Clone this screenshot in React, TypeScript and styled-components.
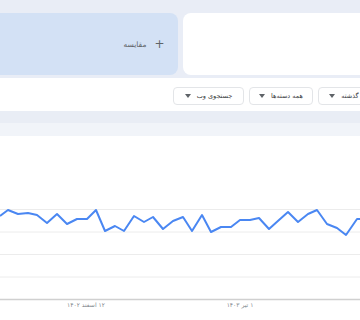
import React from 'react';
import styled, { createGlobalStyle } from 'styled-components';

const GlobalStyle = createGlobalStyle`
  html, body {
    margin: 0;
    padding: 0;
    background: #ffffff;
  }
  body {
    font-family: "DejaVu Sans", "Noto Sans", sans-serif;
  }
  * {
    box-sizing: border-box;
  }
`;

const Page = styled.div`
  width: 360px;
  height: 320px;
  overflow: hidden;
  direction: rtl;
  background: #ffffff;
`;

const TopBand = styled.div`
  background: #e9edf6;
  padding: 13px 0 3px;
`;

const CardRow = styled.div`
  width: 376px;
  margin-right: -8px;
  display: grid;
  grid-template-columns: 1fr 1fr;
  gap: 5px;
`;

const TermCard = styled.div<{ $active?: boolean }>`
  height: 62px;
  border-radius: 8px;
  background: ${(p) => (p.$active ? '#d3e1f5' : '#ffffff')};
  display: flex;
  align-items: center;
  gap: 8px;
  padding-right: 13px;
  color: #5f6368;
  font-size: 7.5px;
`;

const Plus = styled.span`
  font-size: 12px;
  line-height: 1;
  color: #5f6368;
`;

const FilterBand = styled.div`
  background: #ffffff;
  padding: 9px 0 6px;
`;

const FilterRow = styled.div`
  display: flex;
  gap: 5px;
  margin-right: -30px;
`;

const Dropdown = styled.div<{ $w: number }>`
  flex: 0 0 ${(p) => p.$w}px;
  height: 18px;
  border: 1px solid #e3e5e8;
  border-radius: 4px;
  display: flex;
  align-items: center;
  justify-content: center;
  gap: 6px;
  font-size: 6.5px;
  color: #3c4043;
  white-space: nowrap;
`;

const Caret = styled.span`
  width: 0;
  height: 0;
  border-left: 3px solid transparent;
  border-right: 3px solid transparent;
  border-top: 4px solid #5f6368;
`;

const ShadeDark = styled.div`
  height: 12px;
  background: #e9edf5;
`;

const ShadeLight = styled.div`
  height: 13px;
  background: #f1f4f9;
`;

const ChartArea = styled.div`
  height: 185px;
  background: #ffffff;
`;

const points: [number, number][] = [
  [0, 215], [8, 209], [18, 213], [28, 212], [37, 214], [47, 222], [57, 213],
  [67, 223], [77, 218], [87, 218], [96, 209], [105, 230], [115, 225], [124, 230],
  [134, 215], [144, 221], [153, 216], [163, 228], [173, 220], [183, 216],
  [192, 230], [202, 214], [211, 231], [221, 226], [231, 226], [240, 219],
  [250, 219], [259, 217], [269, 228], [279, 219], [288, 211], [298, 221],
  [308, 213], [317, 209], [327, 223], [337, 227], [346, 234], [357, 218], [360, 218],
];

const Chart: React.FC = () => {
  const d = points.map(([x, y], i) => `${i ? 'L' : 'M'}${x} ${y - 135}`).join(' ');
  const grid = [73.5, 96, 118.5, 141];
  return (
    <svg width="360" height="185" viewBox="0 0 360 185">
      {grid.map((y) => (
        <line key={y} x1="0" x2="360" y1={y} y2={y} stroke="#ececec" strokeWidth="1" />
      ))}
      <line x1="0" x2="360" y1="163.5" y2="163.5" stroke="#d0d0d0" strokeWidth="1.5" />
      <path d={d} fill="none" stroke="#4a87f2" strokeWidth="2" strokeLinejoin="round" />
      <text x="86" y="170.5" fontSize="6" fill="#80868b" textAnchor="middle" direction="rtl">
        ۱۲ اسفند ۱۴۰۲
      </text>
      <text x="240" y="170.5" fontSize="6" fill="#80868b" textAnchor="middle" direction="rtl">
        ۱ تیر ۱۴۰۳
      </text>
    </svg>
  );
};

const App: React.FC = () => (
  <>
    <GlobalStyle />
    <Page>
      <TopBand>
        <CardRow>
          <TermCard />
          <TermCard $active>
            <Plus>+</Plus>
            <span>مقایسه</span>
          </TermCard>
        </CardRow>
      </TopBand>
      <FilterBand>
        <FilterRow>
          <Dropdown $w={72}>
            <span>۱۲ ماه گذشته</span>
            <Caret />
          </Dropdown>
          <Dropdown $w={64}>
            <span>همه دسته‌ها</span>
            <Caret />
          </Dropdown>
          <Dropdown $w={71}>
            <span>جستجوی وب</span>
            <Caret />
          </Dropdown>
        </FilterRow>
      </FilterBand>
      <ShadeDark />
      <ShadeLight />
      <ChartArea>
        <Chart />
      </ChartArea>
    </Page>
  </>
);

export default App;
